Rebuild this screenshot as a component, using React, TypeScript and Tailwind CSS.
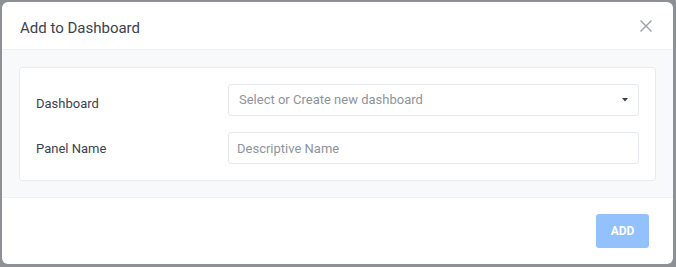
export default function App() {
	return (
		<div
			className="w-[676px] h-[267px] bg-[#8d9095] pl-[2px] pt-[2px]"
			style={{ fontFamily: "Roboto, 'Noto Sans', sans-serif" }}
		>
			<div className="w-[671px] h-[262px] bg-white rounded-[6px] flex flex-col overflow-hidden">
				{/* Header */}
				<div className="h-[48px] flex items-center justify-between pl-[18px] pr-[20px] pt-[5px] border-b border-[#eef0f3]">
					<h1 className="text-[15px] text-[#3b4252] font-normal">Add to Dashboard</h1>
					<button className="text-[#9aa0a8] -mt-[4px]">
						<svg width="14" height="14" viewBox="0 0 14 14" fill="none" stroke="currentColor" strokeWidth="1.4">
							<path d="M1.5 1.5L12.5 12.5M12.5 1.5L1.5 12.5" />
						</svg>
					</button>
				</div>

				{/* Body */}
				<div className="bg-[#f8f9fb] px-[17px] pt-[17px] pb-[16px] border-b border-[#eef0f3]">
					<div className="bg-white border border-[#e8ebef] rounded-[3px] p-4 flex flex-col gap-4">
						<div className="flex items-center">
							<label className="w-[192px] text-[13px] text-[#3b4252] pt-[8px]">Dashboard</label>
							<div className="flex-1 h-[32px] border border-[#e5e8ec] rounded-[3px] flex items-center justify-between pl-[10px] pr-[10px]">
								<span className="text-[13px] text-[#8e949c]">Select or Create new dashboard</span>
								<svg width="6" height="4" viewBox="0 0 6 4" className="text-[#3b3f46]">
									<path d="M0 0H6L3 3.5Z" fill="currentColor" />
								</svg>
							</div>
						</div>
						<div className="flex items-center">
							<label className="w-[192px] text-[13px] text-[#3b4252] pt-[2px]">Panel Name</label>
							<input
								placeholder="Descriptive Name"
								className="flex-1 h-[32px] border border-[#e5e8ec] rounded-[3px] px-[8px] text-[13px] outline-none placeholder:text-[#8e949c]"
							/>
						</div>
					</div>
				</div>

				{/* Footer */}
				<div className="flex-1 flex justify-end items-start pt-[16px] pr-[24px]">
					<button className="w-[53px] h-[34px] bg-[#93c1fb] rounded-[3px] text-white text-[12px] font-bold">
						ADD
					</button>
				</div>
			</div>
		</div>
	);
}
